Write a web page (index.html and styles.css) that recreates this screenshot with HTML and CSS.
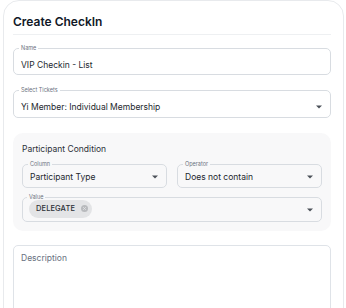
FILE: index.html
```html
<!DOCTYPE html>
<html lang="en">
<head>
    <meta charset="UTF-8">
    <meta name="viewport" content="width=device-width, initial-scale=1.0">
    <title>Create CheckIn</title>
    <link rel="stylesheet" href="styles.css">
</head>
<body>
    <div class="card">
        <h2 class="card-title">Create CheckIn</h2>

        <fieldset class="field field-name">
            <legend>Name</legend>
            <div class="control">VIP Checkin - List</div>
        </fieldset>

        <fieldset class="field field-tickets">
            <legend>Select Tickets</legend>
            <div class="control">
                <span>Yi Member: Individual Membership</span>
                <svg class="caret" width="6" height="4" viewBox="0 0 6 4"><path d="M0 0.5h6L3 3.5z"/></svg>
            </div>
        </fieldset>

        <div class="condition">
            <div class="condition-title">Participant Condition</div>
            <div class="row">
                <fieldset class="field field-small">
                    <legend>Column</legend>
                    <div class="control">
                        <span>Participant Type</span>
                        <svg class="caret" width="6" height="4" viewBox="0 0 6 4"><path d="M0 0.5h6L3 3.5z"/></svg>
                    </div>
                </fieldset>
                <fieldset class="field field-small">
                    <legend>Operator</legend>
                    <div class="control">
                        <span>Does not contain</span>
                        <svg class="caret" width="6" height="4" viewBox="0 0 6 4"><path d="M0 0.5h6L3 3.5z"/></svg>
                    </div>
                </fieldset>
            </div>
            <fieldset class="field field-value">
                <legend>Value</legend>
                <div class="control">
                    <span class="chip">
                        DELEGATE
                        <svg class="chip-x" width="7" height="7" viewBox="0 0 7 7">
                            <circle cx="3.5" cy="3.5" r="3.5"/>
                            <path d="M2.2 2.2l2.6 2.6M4.8 2.2l-2.6 2.6"/>
                        </svg>
                    </span>
                    <svg class="caret" width="6" height="4" viewBox="0 0 6 4"><path d="M0 0.5h6L3 3.5z"/></svg>
                </div>
            </fieldset>
        </div>

        <div class="textarea">Description</div>
    </div>
</body>
</html>
```

FILE: styles.css
```css
* {
    margin: 0;
    padding: 0;
    box-sizing: border-box;
}

body {
    font-family: Inter, "Noto Sans", sans-serif;
    font-size: 8.5px;
    color: #23272e;
    background: #fff;
    overflow: hidden;
}

.card {
    margin-left: 3px;
    width: 341px;
    height: 340px;
    border: 1px solid #e8eaed;
    border-radius: 16px;
    padding: 13px 12px 0 9px;
}

.card-title {
    font-size: 12px;
    line-height: 16px;
    font-weight: 600;
    color: #111827;
    padding-bottom: 4px;
    border-bottom: 1px solid #eef0f2;
    margin-bottom: 9px;
}

.field {
    border: 1px solid #d8dce1;
    border-radius: 5px;
    padding: 0 7px;
    min-width: 0;
}

.field legend {
    font-size: 5.5px;
    line-height: 8px;
    color: #6b7280;
    padding: 0 2px;
    margin-left: -2px;
}

.control {
    display: flex;
    align-items: center;
    justify-content: space-between;
    height: 22px;
    line-height: 12px;
}

.field-name .control {
    padding-top: 3px;
}

.field-tickets {
    margin-top: 11px;
}

.field-tickets .control {
    height: 23px;
    padding-top: 2px;
}

.caret {
    fill: #4b5058;
    flex-shrink: 0;
    margin-right: 1px;
}

.condition {
    margin-top: 15px;
    background: #f8f8f9;
    border-radius: 10px;
    padding: 10px 9px 9px 9px;
}

.condition-title {
    line-height: 12px;
    color: #2c3038;
    margin-bottom: 5px;
}

.row {
    display: grid;
    grid-template-columns: 1fr 1fr;
    gap: 10px;
}

.field-small .control {
    height: 19px;
    padding-bottom: 1px;
}

.field-value {
    margin-top: 5px;
    padding-left: 6px;
}

.field-value .control {
    height: 20px;
    padding-bottom: 2px;
}

.chip {
    display: flex;
    align-items: center;
    gap: 6px;
    height: 18px;
    margin-top: -3px;
    padding: 0 4px 0 7px;
    border-radius: 9px;
    background: #e3e4e6;
    font-size: 7.5px;
    font-weight: 500;
    letter-spacing: 0.1px;
    color: #2b2f36;
}

.chip-x circle {
    fill: #b8babd;
}

.chip-x path {
    stroke: #e3e4e6;
    stroke-width: 0.9;
}

.textarea {
    margin-top: 14px;
    height: 80px;
    border: 1px solid #dfe3e8;
    border-radius: 5px;
    padding: 6px 7px;
    line-height: 12px;
    color: #697180;
}
```
